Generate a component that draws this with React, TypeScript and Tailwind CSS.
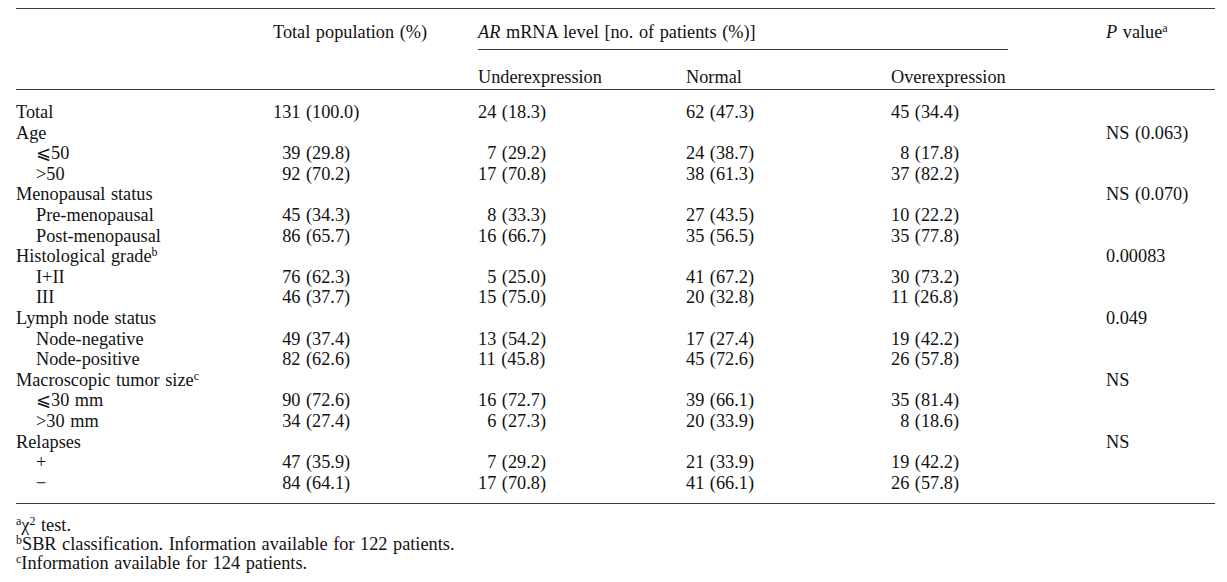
import type { ReactNode } from 'react'

type Row = {
  label: ReactNode
  sub?: boolean
  vals?: string[]
  p?: string
}

const rows: Row[] = [
  { label: 'Total', vals: ['131 (100.0)', '24 (18.3)', '62 (47.3)', '45 (34.4)'] },
  { label: 'Age', p: 'NS (0.063)' },
  { label: '⩽50', sub: true, vals: ['39 (29.8)', '7 (29.2)', '24 (38.7)', '8 (17.8)'] },
  { label: '>50', sub: true, vals: ['92 (70.2)', '17 (70.8)', '38 (61.3)', '37 (82.2)'] },
  { label: 'Menopausal status', p: 'NS (0.070)' },
  { label: 'Pre-menopausal', sub: true, vals: ['45 (34.3)', '8 (33.3)', '27 (43.5)', '10 (22.2)'] },
  { label: 'Post-menopausal', sub: true, vals: ['86 (65.7)', '16 (66.7)', '35 (56.5)', '35 (77.8)'] },
  {
    label: (
      <>
        Histological grade<sup className="text-[12px]">b</sup>
      </>
    ),
    p: '0.00083',
  },
  { label: 'I+II', sub: true, vals: ['76 (62.3)', '5 (25.0)', '41 (67.2)', '30 (73.2)'] },
  { label: 'III', sub: true, vals: ['46 (37.7)', '15 (75.0)', '20 (32.8)', '11 (26.8)'] },
  { label: 'Lymph node status', p: '0.049' },
  { label: 'Node-negative', sub: true, vals: ['49 (37.4)', '13 (54.2)', '17 (27.4)', '19 (42.2)'] },
  { label: 'Node-positive', sub: true, vals: ['82 (62.6)', '11 (45.8)', '45 (72.6)', '26 (57.8)'] },
  {
    label: (
      <>
        Macroscopic tumor size<sup className="text-[12px]">c</sup>
      </>
    ),
    p: 'NS',
  },
  { label: '⩽30 mm', sub: true, vals: ['90 (72.6)', '16 (72.7)', '39 (66.1)', '35 (81.4)'] },
  { label: '>30 mm', sub: true, vals: ['34 (27.4)', '6 (27.3)', '20 (33.9)', '8 (18.6)'] },
  { label: 'Relapses', p: 'NS' },
  { label: '+', sub: true, vals: ['47 (35.9)', '7 (29.2)', '21 (33.9)', '19 (42.2)'] },
  { label: '−', sub: true, vals: ['84 (64.1)', '17 (70.8)', '41 (66.1)', '26 (57.8)'] },
]

// digits before the bracket in each column; shorter counts get padded
const colDigits = [3, 2, 2, 2]

const gridCols = 'grid grid-cols-[257px_205px_208px_205px_215px_109px]'

function Num({ value, digits }: { value: string; digits: number }) {
  const lead = value.split(' ')[0].length
  const pad = Math.max(0, digits - lead)
  return (
    <span className="whitespace-pre">
      {pad > 0 && <span className="invisible">{'0'.repeat(pad)}</span>}
      {value}
    </span>
  )
}

export default function App() {
  return (
    <div className="min-h-[582px] bg-white pl-4 pt-2 font-['Liberation_Serif','Times_New_Roman',serif] text-[18.3px] text-[#121212] [word-spacing:1px]">
      <div className="w-[1199px] border-t border-[#3a3a3a]">
        {/* header */}
        <div className={`${gridCols} h-[41px] items-center pt-[5px] leading-[20.6px]`}>
          <div />
          <div>Total population (%)</div>
          <div className="col-span-3">
            <i>AR</i> mRNA level [no. of patients (%)]
          </div>
          <div>
            <i>P</i> value<sup className="text-[12px]">a</sup>
          </div>
        </div>
        <div className={`${gridCols} h-[40px] border-b border-[#3a3a3a] leading-[20.6px]`}>
          <div />
          <div />
          <div className="col-span-3 -mt-px flex h-full flex-col">
            <div className="w-[530px] border-t border-[#3a3a3a]" />
            <div className="grid flex-1 grid-cols-[208px_205px_215px] items-end">
              <div>Underexpression</div>
              <div>Normal</div>
              <div>Overexpression</div>
            </div>
          </div>
          <div />
        </div>

        {/* body */}
        <div className="border-b border-[#3a3a3a] pt-3 pb-[10px]">
          {rows.map((row, i) => (
            <div key={i} className={`${gridCols} h-[20.6px] leading-[20.6px]`}>
              <div className={row.sub ? 'pl-5' : ''}>{row.label}</div>
              {row.vals
                ? row.vals.map((v, j) => (
                    <div key={j}>
                      <Num value={v} digits={colDigits[j]} />
                    </div>
                  ))
                : [0, 1, 2, 3].map((j) => <div key={j} />)}
              <div>{row.p ?? ''}</div>
            </div>
          ))}
        </div>
      </div>

      {/* footnotes */}
      <div className="pt-[12px] leading-[19px]">
        <p>
          <sup className="text-[12px]">a</sup>χ<sup className="text-[12px]">2</sup> test.
        </p>
        <p>
          <sup className="text-[12px]">b</sup>SBR classification. Information available for 122 patients.
        </p>
        <p>
          <sup className="text-[12px]">c</sup>Information available for 124 patients.
        </p>
      </div>
    </div>
  )
}
